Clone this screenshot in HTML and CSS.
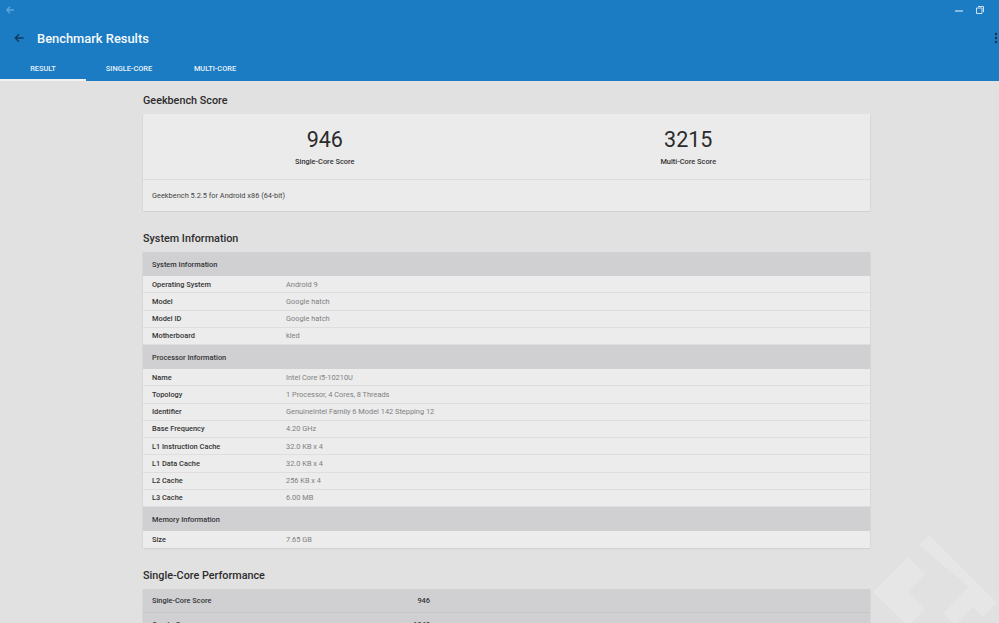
FILE: index.html
```html
<!DOCTYPE html>
<html lang="en">
<head>
<meta charset="utf-8">
<title>Benchmark Results</title>
<link rel="stylesheet" href="styles.css">
</head>
<body>
<header class="appbar">
  <div class="titlebar">
    <svg class="tb-back" width="10" height="10" viewBox="0 0 10 10"><path d="M9 5H2M5 1.8L1.8 5 5 8.2" fill="none" stroke="#5aa6e0" stroke-width="1.3"/></svg>
    <div class="win-ctrls">
      <svg width="10" height="10" viewBox="0 0 10 10"><path d="M1 6h8" stroke="#cfe3f4" stroke-width="1.2"/></svg>
      <svg width="10" height="10" viewBox="0 0 10 10"><path d="M3 1.5h5.5v5.5M1.5 3h5.5v5.5h-5.5z" fill="none" stroke="#cfe3f4" stroke-width="1"/></svg>
    </div>
  </div>
  <div class="toolbar">
    <svg class="back" width="12" height="12" viewBox="0 0 12 12"><path d="M10.5 6H2.5M6 2.3L2.3 6 6 9.7" fill="none" stroke="#123a5c" stroke-width="1.4"/></svg>
    <h1 class="title">Benchmark Results</h1>
    <svg class="dots" width="4" height="12" viewBox="0 0 4 12"><circle cx="2" cy="2" r="1.2" fill="#17314a"/><circle cx="2" cy="6" r="1.2" fill="#17314a"/><circle cx="2" cy="10" r="1.2" fill="#17314a"/></svg>
  </div>
  <nav class="tabs">
    <div class="tab active">RESULT</div>
    <div class="tab">SINGLE-CORE</div>
    <div class="tab">MULTI-CORE</div>
  </nav>
</header>

<main class="content">
  <section class="section first">
    <h2 class="heading">Geekbench Score</h2>
    <div class="card">
      <div class="scores">
        <div class="score"><div class="num">946</div><div class="lbl">Single-Core Score</div></div>
        <div class="score"><div class="num">3215</div><div class="lbl">Multi-Core Score</div></div>
      </div>
      <div class="card-foot">Geekbench 5.2.5 for Android x86 (64-bit)</div>
    </div>
  </section>

  <section class="section">
    <h2 class="heading">System Information</h2>
    <div class="card table">
      <div class="thead">System Information</div>
      <div class="row"><span class="k">Operating System</span><span class="v">Android 9</span></div>
      <div class="row"><span class="k">Model</span><span class="v">Google hatch</span></div>
      <div class="row"><span class="k">Model ID</span><span class="v">Google hatch</span></div>
      <div class="row"><span class="k">Motherboard</span><span class="v">kled</span></div>
      <div class="thead">Processor Information</div>
      <div class="row"><span class="k">Name</span><span class="v">Intel Core i5-10210U</span></div>
      <div class="row"><span class="k">Topology</span><span class="v">1 Processor, 4 Cores, 8 Threads</span></div>
      <div class="row"><span class="k">Identifier</span><span class="v">GenuineIntel Family 6 Model 142 Stepping 12</span></div>
      <div class="row"><span class="k">Base Frequency</span><span class="v">4.20 GHz</span></div>
      <div class="row"><span class="k">L1 Instruction Cache</span><span class="v">32.0 KB x 4</span></div>
      <div class="row"><span class="k">L1 Data Cache</span><span class="v">32.0 KB x 4</span></div>
      <div class="row"><span class="k">L2 Cache</span><span class="v">256 KB x 4</span></div>
      <div class="row"><span class="k">L3 Cache</span><span class="v">6.00 MB</span></div>
      <div class="thead">Memory Information</div>
      <div class="row last"><span class="k">Size</span><span class="v">7.65 GB</span></div>
    </div>
  </section>

  <section class="section">
    <h2 class="heading">Single-Core Performance</h2>
    <div class="card table">
      <div class="prow"><span class="k">Single-Core Score</span><span class="pv">946</span></div>
      <div class="prow"><span class="k">Crypto Score</span><span class="pv">1340</span></div>
    </div>
  </section>
</main>

<svg class="watermark" width="130" height="95" viewBox="0 0 130 95">
  <polygon points="0,57 35,22 52,39 35,57 52,74 35,91" fill="#e6e6e6"/>
  <polygon points="46,10 56,0 124,68 110,82 100,72 82,90 70,78 96,52" fill="#e6e6e6"/>
</svg>
</body>
</html>
```

FILE: styles.css
```css
* { box-sizing: border-box; }

html, body {
  margin: 0;
  padding: 0;
}

body {
  width: 999px;
  height: 623px;
  overflow: hidden;
  background: #e1e1e1;
  font-family: Roboto, "Noto Sans", "Liberation Sans", sans-serif;
  color: #333;
  position: relative;
}

.appbar {
  background: #1b7cc3;
  color: #fff;
}

.titlebar {
  height: 22px;
  display: flex;
  align-items: center;
  justify-content: space-between;
  padding: 0 14px 0 5px;
}

.tb-back { margin-top: -2px; }

.win-ctrls {
  display: flex;
  gap: 11px;
  align-items: center;
  margin-top: -2px;
}

.toolbar {
  height: 34px;
  display: flex;
  align-items: center;
  padding: 0 0 0 13px;
  margin-top: -1px;
}

.title {
  margin: 0 0 0 12px;
  font-size: 12.9px;
  font-weight: 500;
  color: #f4f9fd;
  flex: 1;
}

.dots { margin-right: 1px; }

.tabs {
  display: flex;
  height: 26px;
}

.tab {
  width: 86px;
  display: flex;
  align-items: center;
  justify-content: center;
  font-size: 7.4px;
  font-weight: 500;
  color: #e9f2fa;
  padding-top: 2px;
  border-bottom: 2px solid transparent;
}

.tab.active {
  border-bottom-color: #f2f2f2;
}

.content {
  width: 727px;
  margin-left: 143px;
}

.section { padding-top: 21px; }
.section.first { padding-top: 13px; }

.heading {
  margin: 0 0 6px;
  height: 14px;
  line-height: 14px;
  font-size: 10.8px;
  font-weight: 500;
  color: #2c2c2c;
}

.card {
  background: #ebebeb;
  box-shadow: 0 0.5px 1.5px rgba(0, 0, 0, 0.18);
}

.scores {
  display: grid;
  grid-template-columns: 1fr 1fr;
  height: 66px;
  border-bottom: 1px solid #dcdcdc;
  padding-top: 13px;
}

.score { text-align: center; }

.num {
  font-size: 21.5px;
  line-height: 26px;
  font-weight: 400;
  color: #2b2b2b;
}

.lbl {
  margin-top: 4px;
  font-size: 7.4px;
  line-height: 10px;
  font-weight: 500;
  color: #333;
}

.card-foot {
  height: 31px;
  display: flex;
  align-items: center;
  padding-left: 9px;
  font-size: 7.4px;
  color: #444;
}

.thead {
  height: 24px;
  display: flex;
  align-items: center;
  padding-left: 9px;
  background: #d0d0d3;
  font-size: 7.4px;
  font-weight: 500;
  color: #333;
}

.row {
  height: 17.25px;
  display: grid;
  grid-template-columns: 134px 1fr;
  align-items: center;
  padding-left: 9px;
  border-bottom: 1px solid #dedede;
  background: #ececec;
}

.row.last { border-bottom: none; }

.k {
  font-size: 7.4px;
  font-weight: 500;
  color: #333;
}

.v {
  font-size: 7.4px;
  color: #808080;
}

.prow {
  height: 24px;
  display: grid;
  grid-template-columns: 230px 48px;
  align-items: center;
  padding-left: 9px;
  background: #d0d0d3;
  border-bottom: 1px solid #c6c6c9;
}

.pv {
  text-align: right;
  font-size: 7.4px;
  font-weight: 500;
  color: #333;
}

.watermark {
  position: absolute;
  left: 873px;
  top: 535px;
}
```
